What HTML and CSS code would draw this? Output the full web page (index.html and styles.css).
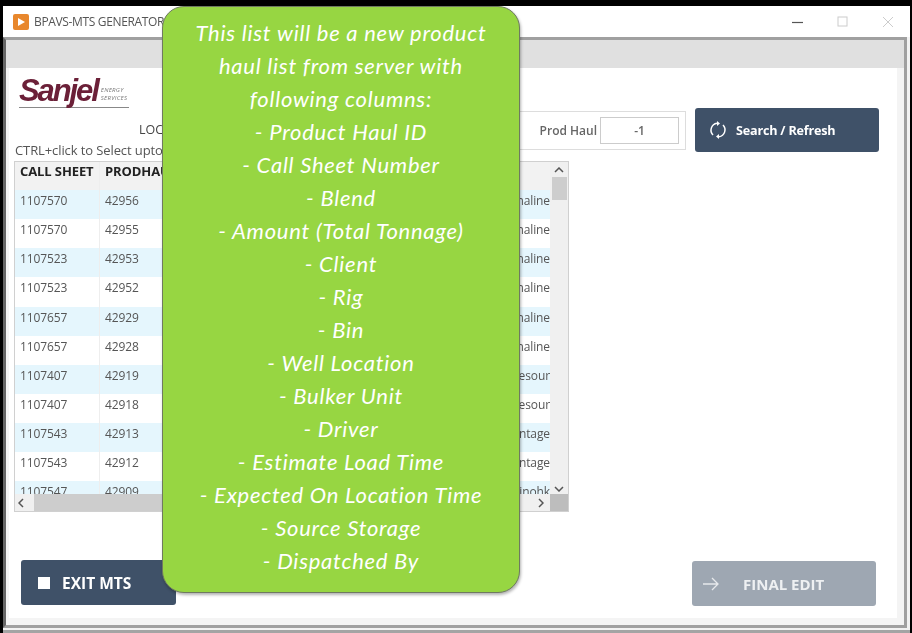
FILE: index.html
```html
<!DOCTYPE html>
<html lang="en">
<head>
<meta charset="utf-8">
<title>BPAVS-MTS GENERATOR</title>
<link rel="stylesheet" href="styles.css">
</head>
<body>
<div class="window">
  <header class="titlebar">
    <svg class="app-icon" viewBox="0 0 16 16" width="16" height="16"><rect width="16" height="16" rx="2" fill="#e8872c"/><path d="M5 4l7 4-7 4z" fill="#fff"/></svg>
    <span class="app-title">BPAVS-MTS GENERATOR</span>
    <div class="win-controls">
      <svg viewBox="0 0 12 12" width="12" height="12"><path d="M0 6.5h11" stroke="#555" stroke-width="1.2"/></svg>
      <svg viewBox="0 0 12 12" width="12" height="12"><rect x="1" y="1" width="9" height="9" fill="none" stroke="#ccc"/></svg>
      <svg viewBox="0 0 12 12" width="12" height="12"><path d="M1 1l10 10M11 1L1 11" stroke="#ccc"/></svg>
    </div>
  </header>
  <div class="frame">
    <div class="band"></div>
    <main class="panel">
      <div class="top">
        <div class="logo-col">
          <div class="logo">
            <span class="logo-word">Sanjel</span>
            <span class="logo-sub">ENERGY<br>SERVICES</span>
          </div>
          <div class="loc">LOCATION</div>
          <div class="hint">CTRL+click to Select upto</div>
        </div>
        <div class="filters">
          <div class="filter-box">
            <span class="filter-label">Prod Haul</span>
            <span class="filter-input">-1</span>
          </div>
          <button class="btn btn-search">
            <svg viewBox="0 0 18 18" width="18" height="18" fill="none" stroke="#fff" stroke-width="1.5"><path d="M4 14A7 7 0 0 1 8 2.2"/><path d="M14 4a7 7 0 0 1-4 11.8"/><path d="M8 0l3 2.4L8 5" fill="#fff" stroke="none"/><path d="M10 13l-3 2.6L10 18" fill="#fff" stroke="none"/></svg>
            <span>Search / Refresh</span>
          </button>
        </div>
      </div>
      <section class="grid">
        <div class="grid-view">
          <div class="row head"><span class="c1">CALL SHEET</span><span class="c2">PRODHAUL</span><span class="c3"></span></div>
          <div class="row alt"><span class="c1">1107570</span><span class="c2">42956</span><span class="c3">naline</span></div>
          <div class="row"><span class="c1">1107570</span><span class="c2">42955</span><span class="c3">naline</span></div>
          <div class="row alt"><span class="c1">1107523</span><span class="c2">42953</span><span class="c3">naline</span></div>
          <div class="row"><span class="c1">1107523</span><span class="c2">42952</span><span class="c3">naline</span></div>
          <div class="row alt"><span class="c1">1107657</span><span class="c2">42929</span><span class="c3">naline</span></div>
          <div class="row"><span class="c1">1107657</span><span class="c2">42928</span><span class="c3">naline</span></div>
          <div class="row alt"><span class="c1">1107407</span><span class="c2">42919</span><span class="c3">esour</span></div>
          <div class="row"><span class="c1">1107407</span><span class="c2">42918</span><span class="c3">esour</span></div>
          <div class="row alt"><span class="c1">1107543</span><span class="c2">42913</span><span class="c3">ntage</span></div>
          <div class="row"><span class="c1">1107543</span><span class="c2">42912</span><span class="c3">ntage</span></div>
          <div class="row alt"><span class="c1">1107547</span><span class="c2">42909</span><span class="c3">inohk</span></div>
        </div>
        <div class="vscroll">
          <svg viewBox="0 0 10 6" width="10" height="6"><path d="M1 5l4-4 4 4" fill="none" stroke="#555" stroke-width="1.5"/></svg>
          <div class="vthumb"></div>
          <svg viewBox="0 0 10 6" width="10" height="6"><path d="M1 1l4 4 4-4" fill="none" stroke="#555" stroke-width="1.5"/></svg>
        </div>
        <div class="hscroll">
          <svg viewBox="0 0 6 10" width="6" height="10"><path d="M5 1L1 5l4 4" fill="none" stroke="#555" stroke-width="1.5"/></svg>
          <div class="hthumb"></div>
          <svg viewBox="0 0 6 10" width="6" height="10"><path d="M1 1l4 4-4 4" fill="none" stroke="#555" stroke-width="1.5"/></svg>
        </div>
        <div class="corner"></div>
      </section>
      <div class="bottom">
        <button class="btn btn-exit"><span class="stop"></span><span>EXIT MTS</span></button>
        <button class="btn btn-final">
          <svg viewBox="0 0 18 14" width="18" height="14" fill="none" stroke="#fff" stroke-opacity=".75" stroke-width="1.3"><path d="M1 7h15M10 1l6 6-6 6"/></svg>
          <span>FINAL EDIT</span>
        </button>
      </div>
    </main>
  </div>
</div>
<aside class="note">
  <p>This list will be a new product</p>
  <p>haul list from server with</p>
  <p>following columns:</p>
  <p>- Product Haul ID</p>
  <p>- Call Sheet Number</p>
  <p>- Blend</p>
  <p>- Amount (Total Tonnage)</p>
  <p>- Client</p>
  <p>- Rig</p>
  <p>- Bin</p>
  <p>- Well Location</p>
  <p>- Bulker Unit</p>
  <p>- Driver</p>
  <p>- Estimate Load Time</p>
  <p>- Expected On Location Time</p>
  <p>- Source Storage</p>
  <p>- Dispatched By</p>
</aside>
</body>
</html>
```
FILE: styles.css
```css
* { box-sizing: border-box; }
html, body { margin: 0; height: 100%; }
body { background: #000; width: 912px; height: 633px; overflow: hidden; position: relative; font-family: "Open Sans", "Liberation Sans", sans-serif; padding: 6px 2px 0 3px; }
.window { height: 627px; background: #f2f2f2; border-bottom: 3px solid #a4a4a4; display: flex; flex-direction: column; filter: blur(0.7px); }
.titlebar { height: 31px; flex: none; display: flex; align-items: center; padding: 0 16px 0 10px; gap: 5px; background: #fff; }
.app-title { font-size: 12px; color: #555; letter-spacing: -0.35px; white-space: nowrap; }
.win-controls { margin-left: auto; display: flex; gap: 33px; align-items: center; }
.frame { flex: 1; margin: 0 3px 2px 0; border: 3px solid #a0a0a0; border-left-color: #666; background: #f4f4f4; padding: 0 7px 7px 3px; display: flex; flex-direction: column; }
.band { height: 28px; flex: none; background: #e0e0e0; margin: 0 -7px 0 -3px; }
.panel { flex: 1; background: #fff; padding: 0 0 0 3px; display: flex; flex-direction: column; }
.top { height: 93px; flex: none; display: flex; justify-content: space-between; }
.logo-col { width: 300px; display: flex; flex-direction: column; }
.logo { margin: 7px 0 0 7px; width: 110px; height: 33px; display: flex; align-items: center; gap: 1px; color: #6b2038; border-bottom: 1px solid #888; }
.logo-word { font-family: "Liberation Sans", sans-serif; font-weight: 700; font-style: italic; font-size: 31px; letter-spacing: -2.1px; line-height: 30px; padding-right: 2px; }
.logo-sub { font-size: 6px; line-height: 8px; color: #777; font-style: italic; letter-spacing: .3px; margin-top: 5px; }
.loc { font-size: 12.5px; color: #444; margin: 13px 0 0 127px; white-space: nowrap; }
.hint { font-size: 13px; color: #555; margin: 3px 0 0 3px; white-space: nowrap; letter-spacing: -0.1px; }
.filters { display: flex; align-items: flex-start; gap: 9px; margin: 40px 18px 0 0; }
.filter-box { width: 170px; height: 39px; margin-top: 3px; border: 1px solid #ddd; display: flex; align-items: center; justify-content: flex-end; padding-right: 6px; gap: 3px; }
.filter-label { font-size: 12px; font-weight: 600; color: #666; }
.filter-input { width: 79px; height: 27px; border: 1px solid #ccc; text-align: center; font-size: 12px; line-height: 25px; font-weight: 600; color: #666; }
.btn { border: 0; border-radius: 3px; color: #fff; font-family: "Open Sans", "Liberation Sans", sans-serif; font-weight: 700; display: flex; align-items: center; padding: 0; }
.btn-search { width: 184px; height: 44px; background: #3f5168; font-size: 12.6px; padding-left: 14px; gap: 9px; letter-spacing: -0.2px; }
.grid { width: 555px; height: 351px; flex: none; margin-left: 2px; border: 1px solid #d0d0d0; display: grid; grid-template-columns: 1fr 18px; grid-template-rows: 1fr 17px; background: #f0f0f0; }
.grid-view { overflow: hidden; background: #fff; min-height: 0; }
.row { height: 29.15px; display: flex; font-size: 12px; color: #555; letter-spacing: -0.1px; }
.row.alt { background: #e5f6fd; }
.row span { height: 100%; padding: 2px 0 0 5px; border-right: 1px solid #eee; white-space: nowrap; overflow: hidden; }
.c1 { width: 85px; flex: none; }
.c2 { width: 150px; flex: none; }
.c3 { flex: 1; text-align: right; border-right: 0 !important; padding-left: 0 !important; }
.row.head { height: 28px; background: #f2f2f2; color: #222; font-size: 13px; font-weight: 700; letter-spacing: -0.1px; }
.row.head span { padding-top: 0; }
.vscroll { display: flex; flex-direction: column; align-items: center; background: #f0f0f0; padding: 5px 0 2px; min-height: 0; }
.vthumb { width: 15px; height: 23px; margin-top: 4px; background: #cdcdcd; }
.vscroll svg:last-child { margin-top: auto; }
.hscroll { display: flex; align-items: center; background: #f0f0f0; padding: 0 6px 0 3px; gap: 10px; }
.hthumb { flex: 1; height: 100%; background: #cdcdcd; margin-right: 20px; }
.corner { background: #bdbdbd; }
.bottom { flex: 1; display: flex; justify-content: space-between; align-items: flex-start; padding: 48px 21px 0 9px; }
.btn-exit { width: 155px; height: 45px; background: #3f5168; font-size: 15.5px; padding-left: 17px; gap: 12px; letter-spacing: 0; }
.stop { width: 12px; height: 12px; background: #fff; }
.btn-final { width: 184px; height: 45px; background: #9ea7b2; font-size: 15px; padding-left: 10px; gap: 23px; margin-top: 1px; }
.btn-final span { color: #eef0f2; }
.note { position: absolute; left: 162px; top: 6px; width: 358px; height: 587px; background: #97d642; border: 1px solid #6f7a60; border-radius: 22px; padding-top: 9px; color: #fff; text-align: center; font-family: "Lato", sans-serif; font-style: italic; font-weight: 400; font-size: 22px; letter-spacing: .75px; box-shadow: 1px 2px 3px rgba(0,0,0,.3); }
.note p { margin: 0; height: 33px; line-height: 33px; white-space: nowrap; }
```
